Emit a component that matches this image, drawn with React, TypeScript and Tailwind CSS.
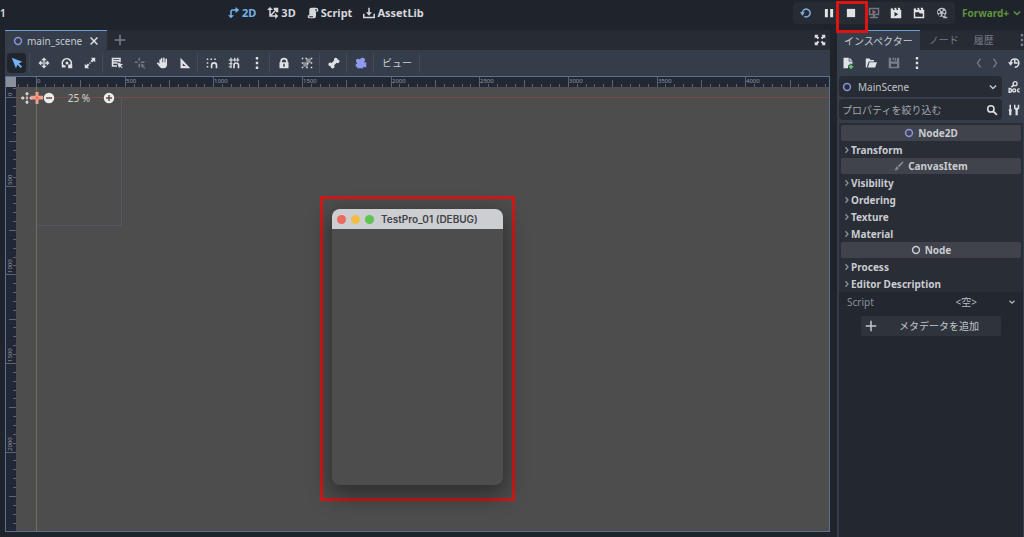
import { useLayoutEffect, useRef, useState } from "react";
import type { ReactNode } from "react";

type IconProps = { children: ReactNode; className?: string };

function Icon({ children, className = "size-3" }: IconProps) {
  return (
    <svg viewBox="0 0 16 16" fill="currentColor" aria-hidden="true" className={`shrink-0 ${className}`}>
      {children}
    </svg>
  );
}

const icons = {
  mode2d: <path d="M3 6a3 3 0 0 1 3-3h4V0l5 4-5 4V5H6a1 1 0 0 0-1 1v5h3l-4 4-4-4h3z" />,
  mode3d: <path d="M4 0l4 4H5v5.600L10.600 4H9V1h6v6h-3V5.400L6.400 11H11V8l4 4-4 4v-3H3V4H0z" />,
  script: <path d="M6 1a3 3 0 0 0-3 3v7H1v2a2 2 0 0 0 2 2h6a3 3 0 0 0 3-3V6h3V4a3 3 0 0 0-3-3zM11 3.500a1 1 0 0 1 2 0V5h-2zM3 12.300h5v1.200H3z" fillRule="evenodd" />,
  download: <path d="M7 1h2v6h3l-4 4.500L4 7h3zM0 9h2v4h12V9h2v6H0z" />,
  ring: <circle cx="8" cy="8" r="5.500" fill="none" stroke="currentColor" strokeWidth="2.400" />,
  close: <path d="M2.500 2.500l11 11m0-11l-11 11" stroke="currentColor" strokeWidth="2.400" />,
  plus: <path d="M8 1v14M1 8h14" stroke="currentColor" strokeWidth="2" />,
  expand: <path d="M1 1h5L4.500 2.500 7 5 5 7 2.500 4.500 1 6zM15 1h-5l1.500 1.500L9 5l2 2 2.500-2.500L15 6zM1 15h5l-1.500-1.500L7 11 5 9l-2.500 2.500L1 10zM15 15h-5l1.500-1.500L9 11l2-2 2.500 2.500L15 10z" />,
  select: <path d="M1 1l5.500 14 2.200-4.800 4.300 4.300 1.700-1.700-4.300-4.300L15 6.400z" />,
  move: <path d="M8 1L5 4h2v2h2V4h2zM4 5L1 8l3 3V9h2V7H4zm8 0v2h-2v2h2v2l3-3zM8 7a1 1 0 0 0 0 2 1 1 0 0 0 0-2zm-1 3v2H5l3 3 3-3H9v-2z" stroke="currentColor" strokeWidth=".6" />,
  rotate: (
    <>
      <path d="M3.500 12.500A6 6 0 1 1 12.500 12" fill="none" stroke="currentColor" strokeWidth="2.200" />
      <path d="M9.500 10H15v5H9.500z" />
      <circle cx="8" cy="8" r="2" />
      <path d="M1 11h5v3H1z" />
    </>
  ),
  scale: <path d="M9 1h6v6l-2-2-2.200 2.200-2-2L11 3zM1 9l2 2 2.200-2.200 2 2L5 13l2 2H1zM7 7.200h1.800V9H7z" />,
  list: <path d="M1 1h12v6h-2V6H3v1h5v2H3v2h5v2H1zM3 3v1h8V3zM8 7l2.700 8 1.300-2.500 2.500 2.500 1-1-2.500-2.500L16 10z" fillRule="evenodd" />,
  pivot: <path d="M6 1h2v4H6zM1 6h4v2H1zM6 9h2v5H6zM9 6h5v2H9zM9 9l6 2-2.500 1 2.500 2.500-1 1L11.500 13 10.500 15z" />,
  hand: <path d="M6.500 2a1 1 0 0 1 2 0v5h1V1.500a1 1 0 0 1 2 0V7h1V3a1 1 0 0 1 2.200 0v7c0 3-1.500 5-5 5-2.500 0-4-.8-5.200-2.500L1.300 8.800c-.7-1.200.8-2.200 1.700-1.200L4.500 9V4a1 1 0 0 1 1-1 1 1 0 0 1 1 1v3z" />,
  ruler: <path d="M2 1v14h13zM5 8.500L9 12H5z" fillRule="evenodd" />,
  snap: (
    <>
      <path d="M1 2h2v2H1zM1 7h2v2H1zM1 12h2v2H1zM6 2h2v2H6zM11 2h2v2h-2z" />
      <path d="M7.500 15v-4a3.200 3.200 0 0 1 6.500 0v4" fill="none" stroke="currentColor" strokeWidth="2.200" />
    </>
  ),
  grid: (
    <>
      <path d="M4 1v14M9 1v5M13 1v5M1 4h14M1 9h5M1 13h4" fill="none" stroke="currentColor" strokeWidth="1.600" />
      <path d="M8 15v-4a3 3 0 0 1 6 0v4" fill="none" stroke="currentColor" strokeWidth="2.200" />
    </>
  ),
  dots: <path d="M6.400 0h3.200v3.200H6.400zM6.400 6.400h3.200v3.200H6.400zM6.400 12.800h3.200V16H6.400z" />,
  lock: <path d="M8 1a5 5 0 0 0-5 5v1H2v8h12V7h-1V6a5 5 0 0 0-5-5zm0 2.200A2.800 2.800 0 0 1 10.800 6v1H5.200V6A2.800 2.800 0 0 1 8 3.200zM7 9h2v4H7z" fillRule="evenodd" />,
  group: (
    <>
      <path d="M7 2h6v6H7zM3 7h6v6H3z" opacity=".5" />
      <path d="M1 1h2v2H1zM6 1h2v2H6zM13 1h2v2h-2zM1 13h2v2H1zM13 13h2v2h-2zM1 7h2v2H1zM13 7h2v2h-2zM7 13h2v2H7zM8 8h2v2H8z" />
    </>
  ),
  bone: <path d="M10.500 1a2.500 2.500 0 0 0-2.300 3.500L4.800 8a2.500 2.500 0 1 0-1 4.200 2.500 2.500 0 1 0 4.200-1L11.500 7.800A2.500 2.500 0 1 0 12.800 3.200 2.500 2.500 0 0 0 10.500 1z" />,
  camera: <path d="M9.500 1a3 3 0 0 0-2.900 2.400A3 3 0 1 0 3 8v1H1v4h2v2h8v-2l4 1V7l-2.600.2V6A3 3 0 0 0 9.500 1z" />,
  reload: (
    <>
      <path d="M3.200 8a5.200 5.200 0 1 1 2.600 4.500" fill="none" stroke="currentColor" strokeWidth="2" />
      <path d="M0 7h6.500L3.200 11.500z" />
    </>
  ),
  pause: <path d="M2.500 2.500h4v11h-4zM9.500 2.500h4v11h-4z" />,
  stop: <path d="M2.500 2.500h11v11h-11z" />,
  remote: (
    <>
      <path d="M1 1h14v10H1zM3 3v6h10V3zM6.500 11h3v2h4v2h-11v-2h4z" fillRule="evenodd" />
      <path d="M6 3.500l5 3-5 3z" fill="#a66a70" />
    </>
  ),
  playScene: <path d="M1 2l2.500-.500 1 2.500h2L5.500 1.200 8 1l1 3h2l-1-3h3l1 3h1v11H1zM6 6.500v6l5-3z" fillRule="evenodd" />,
  playCustom: <path d="M1 2l2.500-.500 1 2.500h2L5.500 1.200 8 1l1 3h2l-1-3h3l1 3h1v11H1zM3 7v6h10V8.500H9L8 7z" fillRule="evenodd" />,
  movie: (
    <path
      d="M7.500 1a6 6 0 1 0 2 11.600V15H15v-2h-2.500v-2A6 6 0 0 0 7.500 1zm0 1.500a1.500 1.500 0 1 1 0 3 1.500 1.500 0 0 1 0-3zM4 5a1.500 1.500 0 1 1 0 3 1.500 1.500 0 0 1 0-3zm7 0a1.500 1.500 0 1 1 0 3 1.500 1.500 0 0 1 0-3zM5 9a1.500 1.500 0 1 1 0 3 1.500 1.500 0 0 1 0-3zm5 0a1.500 1.500 0 1 1 0 3 1.500 1.500 0 0 1 0-3z"
      fillRule="evenodd"
    />
  ),
  chevronDown: <path d="M3 5.500l5 5 5-5" fill="none" stroke="currentColor" strokeWidth="2.400" />,
  chevronRight: <path d="M5 2.500l5 5.500-5 5.500" fill="none" stroke="currentColor" strokeWidth="2.600" />,
  left: <path d="M10.500 1l-5 7 5 7" fill="none" stroke="currentColor" strokeWidth="2" />,
  right: <path d="M5.500 1l5 7-5 7" fill="none" stroke="currentColor" strokeWidth="2" />,
  newFile: (
    <>
      <path d="M2 1h7v5h5v3h-4v2H8v4H2zM10 1l4 4h-4z" />
      <path d="M11 10h2v2h2v2h-2v2h-2v-2H9v-2h2z" fill="#5fd06f" />
    </>
  ),
  folder: <path d="M1 2h5l1.500 2H12v2H5l-2 5.500V14H2a1 1 0 0 1-1-1zM6 7h10l-2.500 7H4z" />,
  save: <path d="M1 1h3v5h8V1h2l1 1v13H1zM6 1h2v3H6zM9 1h2v4H9zM4 9v4h8V9z" fillRule="evenodd" />,
  history: (
    <>
      <path d="M3.500 8A5.500 5.500 0 1 1 9 13.500" fill="none" stroke="currentColor" strokeWidth="2" />
      <path d="M0 7h7l-3.500 4.500zM8 4h2v3h3v2H8z" />
    </>
  ),
  search: (
    <>
      <circle cx="6.500" cy="6.500" r="4.200" fill="none" stroke="currentColor" strokeWidth="2" />
      <path d="M9.500 9.500l5 5" stroke="currentColor" strokeWidth="2.400" />
    </>
  ),
  tools: <path d="M2 1h2v6h1v2l-.500 1V15h-3v-5L1 9V7h1zM8 1h2v4h3V1h2v5l-2 2v7h-3V8L8 6z" />,
  brush: <path d="M14.500 1c.8.700.5 1.500 0 2.200L8.500 10 6 7.500l6.800-6C13.500.8 14 .500 14.500 1zM5 8.500L7.500 11C6.500 14 4 15 1 15c1.500-1.500 1-5 4-6.500z" />,
};

function ToolButton({ label, className = "w-[23px]", children }: { label: string; className?: string; children: ReactNode }) {
  return (
    <button type="button" aria-label={label} className={`flex h-5 shrink-0 items-center justify-center ${className}`}>
      {children}
    </button>
  );
}

function Divider() {
  return <span className="mr-0.5 ml-px h-5 w-px shrink-0 bg-[#444b58]" />;
}

function TopBar() {
  return (
    <header className="flex h-[30px] shrink-0 items-start justify-between pt-0.5">
      <div className="flex h-[22px] items-center">
        <span className="w-5 font-semibold">1</span>
        <nav className="ml-[208px] flex items-center gap-[11px] text-[11px] font-bold text-[#d5d7db]">
          <button type="button" className="flex items-center gap-0.5 text-[#73b4ef]"><Icon>{icons.mode2d}</Icon>2D</button>
          <button type="button" className="flex items-center gap-0.5"><Icon>{icons.mode3d}</Icon>3D</button>
          <button type="button" className="flex items-center gap-0.5"><Icon>{icons.script}</Icon>Script</button>
          <button type="button" className="flex items-center gap-0.5"><Icon>{icons.download}</Icon>AssetLib</button>
        </nav>
      </div>
      <div className="flex items-center">
        <div className="flex h-[22px] items-center rounded-sm bg-[#262b34] pr-px pl-0.5">
          <ToolButton label="Reload"><span className="text-[#82aee0]"><Icon>{icons.reload}</Icon></span></ToolButton>
          <ToolButton label="Pause" className="w-[22px]"><Icon>{icons.pause}</Icon></ToolButton>
          <div className="relative">
            <ToolButton label="Stop"><Icon>{icons.stop}</Icon></ToolButton>
            <span className="pointer-events-none absolute -top-[2px] -left-[4px] z-10 h-8 w-8 border-[3px] border-[#dd1414]" />
          </div>
          <ToolButton label="Remote deploy" className="w-[22px]"><span className="text-[#717680]"><Icon>{icons.remote}</Icon></span></ToolButton>
          <ToolButton label="Play scene"><Icon>{icons.playScene}</Icon></ToolButton>
          <ToolButton label="Play custom scene"><Icon>{icons.playCustom}</Icon></ToolButton>
          <ToolButton label="Movie maker"><span className="text-[#b9bcc2]"><Icon>{icons.movie}</Icon></span></ToolButton>
        </div>
        <button type="button" className="mr-0.5 ml-[7px] flex items-center gap-[3px] font-bold text-[#5f943e]">
          Forward+ <Icon className="size-2.5">{icons.chevronDown}</Icon>
        </button>
      </div>
    </header>
  );
}

const UNIT = 88.65;

function Ruler({ vertical = false, origin }: { vertical?: boolean; origin: number }) {
  const box = useRef<HTMLDivElement>(null);
  const [length, setLength] = useState(0);

  useLayoutEffect(() => {
    const element = box.current;
    if (!element) return;
    const measure = () => setLength(vertical ? element.clientHeight : element.clientWidth);
    measure();
    const observer = new ResizeObserver(measure);
    observer.observe(element);
    return () => observer.disconnect();
  }, [vertical]);

  const first = -Math.floor((origin * 10) / UNIT);
  const count = Math.max(0, Math.ceil(((length - origin) * 10) / UNIT) - first);
  const ticks = Array.from({ length: count }, (_, i) => i + first);
  const labels = ticks.filter((i) => {
    const at = origin + (i * UNIT) / 10;
    return i % 10 === 0 && i >= 0 && (vertical ? at < length : at + 18 < length);
  });

  return (
    <div ref={box} className="h-full w-full overflow-hidden bg-[#212735]">
      <svg className="block h-full w-full" aria-hidden="true">
        {ticks.map((i) => {
          const at = Math.round(origin + (i * UNIT) / 10);
          const start = i % 10 === 0 ? 0 : i % 5 === 0 ? 3 : 7;
          return vertical ? (
            <rect key={i} x={start} y={at} width={10 - start} height="1" fill="#5c6372" />
          ) : (
            <rect key={i} x={at} y={start} width="1" height={10 - start} fill="#5c6372" />
          );
        })}
        {labels.map((i) => {
          const at = Math.round(origin + (i * UNIT) / 10);
          return (
            <text
              key={i}
              x={vertical ? 0 : at + 1}
              y={vertical ? 0 : 6}
              fontSize="6"
              fill="#9499a2"
              transform={vertical ? `translate(6 ${at - 1}) rotate(-90)` : undefined}
            >
              {i * 50}
            </text>
          );
        })}
      </svg>
    </div>
  );
}

function GameWindow() {
  return (
    <div className="absolute top-[109px] left-[304px] border-[3px] border-[#d01818] px-[9px] pt-[10px] pb-[13px]">
      <section className="w-[171px] overflow-hidden rounded-lg bg-[#4d4d4d] shadow-[0_8px_22px_3px_rgba(0,0,0,0.4)]">
        <div className="flex h-5 items-center gap-[5px] bg-[#cdced1] px-[5px]">
          <span className="size-[9px] rounded-full bg-[#ec6a5e]" />
          <span className="size-[9px] rounded-full bg-[#f0bd45]" />
          <span className="size-[9px] rounded-full bg-[#5fc454]" />
          <h2 className="ml-0.5 font-[Inter,sans-serif] text-[10px] font-semibold whitespace-nowrap text-[#414245]">TestPro_01 (DEBUG)</h2>
        </div>
        <div className="h-64" />
      </section>
    </div>
  );
}

function Canvas() {
  return (
    <div className="relative overflow-hidden bg-[#4d4d4d]">
      <div className="absolute top-2.5 left-5 h-[129px] w-[86px] border border-[#57556c]" />
      <div className="absolute top-2.5 left-0 h-px w-full bg-[#7c484b]" />
      <div className="absolute top-0 left-5 h-full w-px bg-[#6c7458]" />
      <div className="absolute top-[5px] left-[5px] flex h-3 items-center">
        <button type="button" aria-label="Center view" className="text-[#dcdcdc]">
          <Icon>
            <path d="M7 6h2v4H7zM0 7h2V5l3 3-3 3V9H0zM16 7h-2V5l-3 3 3 3V9h2zM7 0h2v2h2L8 5 5 2h2zM7 16h2v-2h2l-3-3-3 3h2z" />
          </Icon>
        </button>
        <Icon className="-ml-[2px] size-3 text-[#f0a08c]">
          <path d="M6 0h4v5h6v5h-6v6H6v-6H0V5h6z" />
          <circle cx="8" cy="7.500" r="2" fill="#ef6b55" />
        </Icon>
        <button type="button" aria-label="Zoom out" className="text-[#ececec]">
          <Icon><path d="M8 1a7 7 0 1 0 0 14A7 7 0 0 0 8 1zM4 7h8v2H4z" fillRule="evenodd" /></Icon>
        </button>
        <button type="button" className="w-12 text-[#d2d2d2]">25 %</button>
        <button type="button" aria-label="Zoom in" className="text-[#ececec]">
          <Icon><path d="M8 1a7 7 0 1 0 0 14A7 7 0 0 0 8 1zM4 7h3V4h2v3h3v2H9v3H7V9H4z" fillRule="evenodd" /></Icon>
        </button>
      </div>
      <GameWindow />
    </div>
  );
}

function SceneEditor() {
  return (
    <main className="flex min-w-0 flex-1 flex-col">
      <div className="flex h-5 shrink-0 items-stretch bg-[#262b34]">
        <div className="flex items-center border-t border-[#6a9fd4] bg-[#363d4a] px-2">
          <span className="flex text-[#8b93dc]"><Icon className="size-2.5">{icons.ring}</Icon></span>
          <span className="mr-[7px] ml-1 text-[#c4c8d0]">main_scene</span>
          <button type="button" aria-label="Close tab"><Icon className="size-2.5">{icons.close}</Icon></button>
        </div>
        <button type="button" aria-label="New scene" className="ml-[7px] text-[#7a808b]"><Icon>{icons.plus}</Icon></button>
        <button type="button" aria-label="Distraction free mode" className="mr-1 ml-auto"><Icon>{icons.expand}</Icon></button>
      </div>
      <div className="flex h-[26px] shrink-0 items-center bg-[#363d4a]">
        <ToolButton label="Select" className="mx-[2px] w-[19px] rounded-sm bg-[#20252e] text-[#73b4f5]"><Icon>{icons.select}</Icon></ToolButton>
        <Divider />
        <ToolButton label="Move"><Icon>{icons.move}</Icon></ToolButton>
        <ToolButton label="Rotate"><Icon>{icons.rotate}</Icon></ToolButton>
        <ToolButton label="Scale"><Icon>{icons.scale}</Icon></ToolButton>
        <Divider />
        <ToolButton label="List select"><Icon>{icons.list}</Icon></ToolButton>
        <ToolButton label="Pivot" className="w-[23px] text-[#737985]"><Icon>{icons.pivot}</Icon></ToolButton>
        <ToolButton label="Pan" className="w-[22px]"><Icon>{icons.hand}</Icon></ToolButton>
        <ToolButton label="Ruler"><Icon>{icons.ruler}</Icon></ToolButton>
        <Divider />
        <ToolButton label="Smart snap"><Icon>{icons.snap}</Icon></ToolButton>
        <ToolButton label="Grid snap" className="w-[22px]"><Icon>{icons.grid}</Icon></ToolButton>
        <ToolButton label="Snapping options"><Icon>{icons.dots}</Icon></ToolButton>
        <Divider />
        <ToolButton label="Lock"><Icon>{icons.lock}</Icon></ToolButton>
        <ToolButton label="Group"><Icon>{icons.group}</Icon></ToolButton>
        <Divider />
        <ToolButton label="Skeleton"><Icon>{icons.bone}</Icon></ToolButton>
        <Divider />
        <ToolButton label="Override camera" className="w-[23px] text-[#8f99ee]"><Icon>{icons.camera}</Icon></ToolButton>
        <Divider />
        <button type="button" className="px-1.5 text-[#c8cbd2]">ビュー</button>
        <Divider />
      </div>
      <div className="grid min-h-0 flex-1 grid-cols-[10px_1fr] grid-rows-[10px_1fr] border border-[#5a7190]">
        <div className="bg-[#8a909c]" />
        <div className="min-w-0 overflow-hidden"><Ruler origin={20} /></div>
        <div className="min-h-0 overflow-hidden"><Ruler vertical origin={10} /></div>
        <Canvas />
      </div>
    </main>
  );
}

function ClassHeader({ icon, children }: { icon: ReactNode; children: ReactNode }) {
  return (
    <h3 className="flex h-4 items-center justify-center gap-1 rounded-xs bg-[#40434b] font-bold text-[#c9cbd0]">
      {icon}
      {children}
    </h3>
  );
}

function Sections({ names }: { names: string[] }) {
  return (
    <>
      {names.map((name) => (
        <button key={name} type="button" className="flex h-[17px] w-full items-center pl-0.5 font-bold text-[#c9cbd0]">
          <span className="text-[#8f949d]"><Icon className="size-2">{icons.chevronRight}</Icon></span>
          {name}
        </button>
      ))}
    </>
  );
}

function Inspector() {
  return (
    <aside className="flex w-[187px] shrink-0 flex-col">
      <div className="flex h-5 shrink-0 items-center bg-[#262b34] text-[#777c86]">
        <button type="button" className="h-full border-t border-[#6a9fd4] bg-[#363d4a] px-[7px] text-[#c8cbd2]">インスペクター</button>
        <button type="button" className="ml-[9px] w-[30px]">ノード</button>
        <button type="button" className="ml-[15px]">履歴</button>
        <button type="button" aria-label="Dock options" className="-mr-1 ml-auto"><Icon>{icons.dots}</Icon></button>
      </div>
      <div className="flex min-h-0 flex-1 flex-col bg-[#363d4a] pr-px pl-0.5">
        <div className="flex h-[26px] shrink-0 items-center">
          <ToolButton label="New resource" className="w-[23px] pr-[5px]"><Icon>{icons.newFile}</Icon></ToolButton>
          <ToolButton label="Load resource" className="w-[23px] pr-[5px]"><Icon>{icons.folder}</Icon></ToolButton>
          <ToolButton label="Save resource" className="w-[23px] pr-[5px] text-[#7a808b]"><Icon>{icons.save}</Icon></ToolButton>
          <ToolButton label="Resource options" className="w-[17px]"><Icon>{icons.dots}</Icon></ToolButton>
          <div className="ml-auto flex text-[#7a808b]">
            <ToolButton label="Previous" className="w-4"><Icon className="size-2.5">{icons.left}</Icon></ToolButton>
            <ToolButton label="Next" className="w-4"><Icon className="size-2.5">{icons.right}</Icon></ToolButton>
          </div>
          <ToolButton label="History" className="ml-0.5 w-[18px]"><Icon>{icons.history}</Icon></ToolButton>
        </div>
        <div className="flex shrink-0 items-center justify-between">
          <button type="button" className="flex h-[21px] w-[163px] items-center rounded-sm bg-[#262b34] pr-1 pl-[3px] text-[#c0c3ca]">
            <span className="mr-1.5 text-[#8b93dc]"><Icon className="size-2.5">{icons.ring}</Icon></span>
            MainScene
            <Icon className="ml-auto size-2.5">{icons.chevronDown}</Icon>
          </button>
          <ToolButton label="Open documentation" className="w-[18px]">
            <svg viewBox="0 0 16 16" className="size-3" fill="none" stroke="currentColor" aria-hidden="true">
              <circle cx="9.500" cy="3.500" r="2.600" strokeWidth="1.800" />
              <path d="M7.500 5.500L4.500 8.200" strokeWidth="2.200" />
              <path d="M1.500 10v5h.600a2.300 2.300 0 0 0 0-5z" strokeWidth="1.800" />
              <circle cx="8.200" cy="12.500" r="2" strokeWidth="1.800" />
              <path d="M15.500 10.500h-.8a2 2 0 0 0 0 4h.8" strokeWidth="1.800" />
            </svg>
          </ToolButton>
        </div>
        <div className="mt-0.5 flex shrink-0 items-center justify-between">
          <label className="flex h-[21px] w-[163px] items-center rounded-sm bg-[#262b34] pr-1 pl-[3px]">
            <input
              type="text"
              aria-label="プロパティを絞り込む"
              placeholder="プロパティを絞り込む"
              className="min-w-0 flex-1 bg-transparent outline-none placeholder:text-[#a4a8b0]"
            />
            <Icon>{icons.search}</Icon>
          </label>
          <ToolButton label="Property settings" className="w-[18px]"><Icon>{icons.tools}</Icon></ToolButton>
        </div>
        <div className="mt-[3px] min-h-0 flex-1 bg-[#222730]">
          <div className="bg-[#282d36] px-0.5 pt-0.5">
            <ClassHeader icon={<span className="text-[#8b93dc]"><Icon className="size-2.5">{icons.ring}</Icon></span>}>Node2D</ClassHeader>
            <Sections names={["Transform"]} />
            <ClassHeader icon={<span className="text-[#858890]"><Icon className="size-2.5">{icons.brush}</Icon></span>}>CanvasItem</ClassHeader>
            <Sections names={["Visibility", "Ordering", "Texture", "Material"]} />
            <ClassHeader icon={<Icon className="size-2.5">{icons.ring}</Icon>}>Node</ClassHeader>
            <Sections names={["Process", "Editor Description"]} />
          </div>
          <div className="grid h-5 grid-cols-2 items-center pr-[7px] pl-2 text-[#8b9099]">
            <span>Script</span>
            <button type="button" className="flex items-center justify-between pl-6 text-[#b6b9c0]">
              &lt;空&gt;
              <Icon className="size-2">{icons.chevronDown}</Icon>
            </button>
          </div>
          <button type="button" className="mx-auto mt-1 flex h-5 w-[140px] items-center rounded-xs bg-[#2e333c] px-1 text-[#c4c7cd]">
            <Icon>{icons.plus}</Icon>
            <span className="flex-1 pl-1 text-center">メタデータを追加</span>
          </button>
        </div>
      </div>
    </aside>
  );
}

export default function App() {
  return (
    <div className="flex h-screen flex-col overflow-hidden bg-[#1f232b] font-['Noto_Sans','Noto_Sans_CJK_JP',sans-serif] text-[10px] leading-4 text-[#e0e1e4]">
      <TopBar />
      <div className="flex min-h-0 flex-1 gap-[7px]">
        <div className="flex min-w-0 flex-1 pb-[5px] pl-[5px]">
          <SceneEditor />
        </div>
        <Inspector />
      </div>
    </div>
  );
}
